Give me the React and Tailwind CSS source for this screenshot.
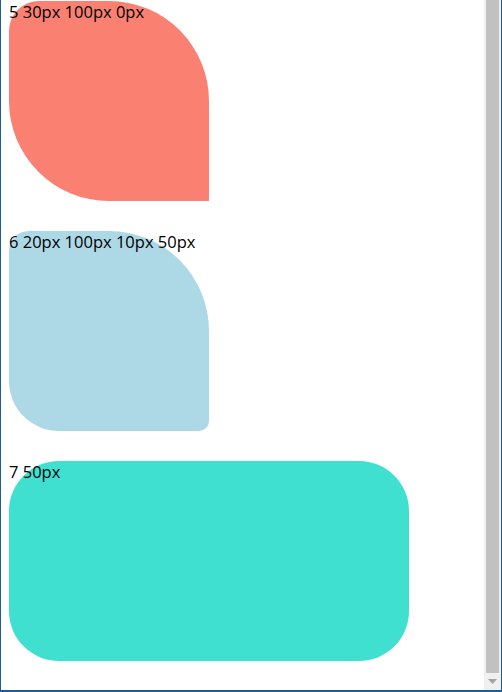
export default function App() {
  return (
    <div className="flex w-[502px] h-[692px] overflow-hidden bg-white border-l border-r border-b-2 border-[#1c5c9c]">
      <div className="flex-1 overflow-hidden pt-px pl-2 text-black text-[16.5px] leading-[22px]" style={{ fontFamily: '"Open Sans", "Liberation Sans", sans-serif' }}>
        <div className="w-[200px] h-[200px] mb-[30px] bg-[#fa8072] rounded-tl-[30px] rounded-tr-[100px] rounded-br-none rounded-bl-[100px]">
          5 30px 100px 0px
        </div>
        <div className="w-[200px] h-[200px] mb-[30px] bg-[#add8e6] rounded-tl-[20px] rounded-tr-[100px] rounded-br-[10px] rounded-bl-[50px]">
          6 20px 100px 10px 50px
        </div>
        <div className="w-[400px] h-[200px] bg-[#40e0d0] rounded-[50px]">
          7 50px
        </div>
      </div>
      <div className="w-[17px] flex flex-col bg-[#f0f0f0]">
        <div className="flex-1 mx-[2px] bg-[#c1c1c1]" />
        <div className="h-[17px] flex items-center justify-center">
          <svg width="9" height="5" viewBox="0 0 9 5">
            <path d="M0 0 H9 L4.5 5 Z" fill="#a3a3a3" />
          </svg>
        </div>
      </div>
    </div>
  );
}
